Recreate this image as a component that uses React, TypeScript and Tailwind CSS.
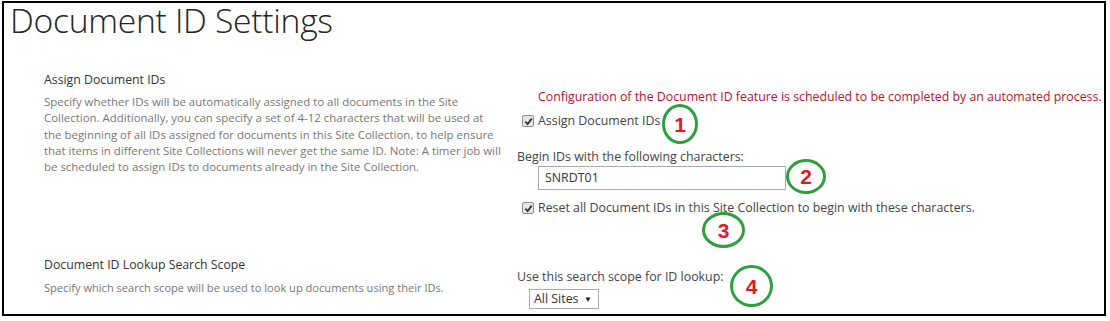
import React from "react";

const font = { fontFamily: '"Open Sans", "Noto Sans", sans-serif' };

function Badge({ n, className }: { n: string; className: string }) {
  return (
    <div
      className={`absolute rounded-[50%] border-[3px] border-[#2e9e3e] flex items-center justify-center bg-transparent ${className}`}
    >
      <span
        className="text-[#e0192b] font-bold text-[21px] leading-none"
        style={{ fontFamily: '"Liberation Sans", Arial, sans-serif' }}
      >
        {n}
      </span>
    </div>
  );
}

function Check() {
  return (
    <span className="w-[12px] h-[12px] border border-[#8f8f8f] bg-[#e6e6e6] rounded-[2px] flex items-center justify-center shrink-0">
      <svg width="9" height="9" viewBox="0 0 10 10">
        <path d="M1.5 5.2 L4 7.8 L8.6 1.8" stroke="#333" strokeWidth="2" fill="none" />
      </svg>
    </span>
  );
}

export default function App() {
  return (
    <div className="bg-white w-[1110px] h-[321px] pt-[1px] pl-[2px]" style={font}>
      <div className="relative w-[1104px] h-[315px] border-2 border-black flex flex-col">
        <h1 className="text-[33.7px] font-light text-[#262626] leading-[46px] pl-[6px] -mt-[6px] tracking-[-0.3px] h-[46px] relative top-[0px]">
          Document ID Settings
        </h1>

        <div className="flex mt-[28px]">
          <div className="w-[513px] pl-[40px] shrink-0">
            <div className="text-[12.3px] text-[#333] leading-[18px]">Assign Document IDs</div>
            <p className="text-[11.45px] text-[#777] leading-[16.3px] mt-[5px] whitespace-nowrap">
              Specify whether IDs will be automatically assigned to all documents in the Site
              <br />
              Collection. Additionally, you can specify a set of 4-12 characters that will be used at
              <br />
              the beginning of all IDs assigned for documents in this Site Collection, to help ensure
              <br />
              that items in different Site Collections will never get the same ID. Note: A timer job will
              <br />
              be scheduled to assign IDs to documents already in the Site Collection.
            </p>
          </div>
          <div className="flex-1 text-[12.4px] text-[#444] pt-[17px]">
            <div className="pl-[21px] text-[#c0102e] leading-[18px] whitespace-nowrap text-[12.35px]">
              Configuration of the Document ID feature is scheduled to be completed by an automated process.
            </div>
            <div className="flex items-center gap-[4px] pl-[5px] mt-[6px] h-[18px]">
              <Check />
              <span>Assign Document IDs</span>
            </div>
            <div className="mt-[18px] leading-[18px]">Begin IDs with the following characters:</div>
            <div className="pl-[21px]">
              <div className="w-[248px] h-[24px] border border-[#ababab] px-[6px] flex items-center text-[#333]">
                SNRDT01
              </div>
            </div>
            <div className="flex items-center gap-[4px] pl-[5px] mt-[9px] h-[18px]">
              <Check />
              <span>Reset all Document IDs in this Site Collection to begin with these characters.</span>
            </div>
          </div>
        </div>

        <div className="flex mt-[39px]">
          <div className="w-[513px] pl-[40px] shrink-0">
            <div className="text-[12.3px] text-[#333] leading-[18px]">Document ID Lookup Search Scope</div>
            <p className="text-[11.1px] text-[#777] leading-[16px] mt-[6px] whitespace-nowrap">
              Specify which search scope will be used to look up documents using their IDs.
            </p>
          </div>
          <div className="flex-1 text-[12.4px] text-[#444] pt-[12px]">
            <div className="leading-[18px]">Use this search scope for ID lookup:</div>
            <div className="pl-[12px] mt-[3px]">
              <div className="w-[70px] h-[20px] border border-[#ababab] flex items-center justify-between pl-[4px] pr-[6px] text-[#333]">
                <span>All Sites</span>
                <span className="text-[8px] text-[#222]">▼</span>
              </div>
            </div>
          </div>
        </div>

        <Badge n="1" className="left-[658px] top-[101px] w-[36px] h-[40px]" />
        <Badge n="2" className="left-[782px] top-[156px] w-[40px] h-[35px]" />
        <Badge n="3" className="left-[698px] top-[209px] w-[43px] h-[36px]" />
        <Badge n="4" className="left-[726px] top-[262px] w-[43px] h-[42px]" />
      </div>
    </div>
  );
}
